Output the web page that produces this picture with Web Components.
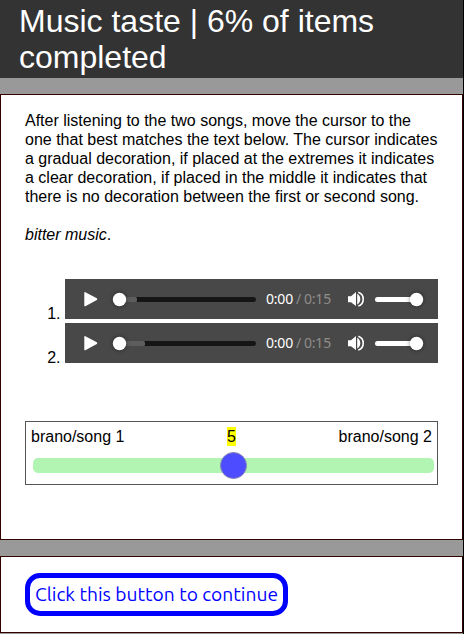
<!DOCTYPE html>
<html lang="en">
<head>
<meta charset="utf-8">
<title>Music taste</title>
<style>
body{margin:0;background:#999;overflow:hidden;font:16px/19px "Liberation Sans",Arial,sans-serif;color:#000}
</style>
</head>
<body>
<survey-page>
<page-title>Music taste | 6% of items<br>completed</page-title>
<page-card style="--h:446px">
<task-text>After listening to the two songs, move the cursor to the<br>one that best matches the text below. The cursor indicates<br>a gradual decoration, if placed at the extremes it indicates<br>a clear decoration, if placed in the middle it indicates that<br>there is no decoration between the first or second song.<br><br><i>bitter music</i>.</task-text>
<song-list>
<song-player number="1." buffered="17"></song-player>
<song-player number="2." buffered="25"></song-player>
</song-list>
<preference-slider value="5"><span slot="left">brano/song 1</span><span slot="right">brano/song 2</span></preference-slider>
</page-card>
<page-card style="--h:77px"><continue-button>Click this button to continue</continue-button></page-card>
</survey-page>
<script>
const define = (name, html, setup) => customElements.define(name, class extends HTMLElement {
  constructor() {
    super();
    this.attachShadow({mode: 'open'}).innerHTML = html;
  }
  connectedCallback() { if (setup) setup(this, this.shadowRoot); }
});

define('survey-page', `<style>
:host{display:flex;flex-direction:column;gap:16px;box-sizing:border-box;height:634px;border-right:1px solid #000}
</style><slot></slot>`);

define('page-title', `<style>
:host{display:block;box-sizing:border-box;height:78px;flex:none;padding:3px 19px;background:#333;color:#fff;font-size:32px;line-height:36px;white-space:nowrap}
</style><slot></slot>`);

define('page-card', `<style>
:host{display:block;box-sizing:border-box;height:var(--h);flex:none;padding:16px 24px;background:#fff;border:1px solid #300}
</style><slot></slot>`);

define('task-text', `<style>:host{display:block;white-space:nowrap}</style><slot></slot>`);

define('song-list', `<style>
:host{display:flex;flex-direction:column;gap:4px;margin-top:35px}
</style><slot></slot>`);

define('song-player', `<style>
:host{display:grid;grid-template-columns:40px 373px;height:40px}
.num{align-self:end;text-align:right;padding-right:4.5px;line-height:19px;transform:translateY(4px)}
.bar{display:flex;align-items:center;height:40px;background:#484848;font:14px/20px "Noto Sans",sans-serif;letter-spacing:-.2px;white-space:nowrap;overflow:hidden}
svg{display:block;flex:none}
.time{width:91px;display:flex;color:#fff;padding-left:10px;box-sizing:border-box}
.dim{color:#8f8d8a}
.sep{padding:0 3px}
.knob{filter:drop-shadow(0 0 2px #0007)}
</style>
<span class="num"></span>
<div class="bar">
<svg width="191" height="40"><path d="M20 13.8L31 19.6Q32 20.1 31 20.7L20 26.6Z" fill="#fff" stroke="#fff" stroke-width="1.4" stroke-linejoin="round"/>
<rect x="52" y="18" width="139" height="5" rx="2.5" fill="#151515"/><rect class="buf" x="55" y="18" height="5" rx="1.5" fill="#5d5d5d"/>
<circle class="knob" cx="54.5" cy="20.5" r="6.7" fill="#fff"/></svg>
<div class="time"><span>0:00</span><span class="dim sep">/</span><span class="dim">0:15</span></div>
<svg width="91" height="40"><path d="M1 17.3H4L9 13V27L4 23.3H1Z" fill="#fff"/><path d="M10.2 14.8Q13.3 16.8 13.3 20.2T10.2 25.6Z" fill="#fff"/><path d="M11.3 13.3Q16.2 15 16.2 20.2T11.3 27" fill="none" stroke="#fff" stroke-width="1.6"/>
<rect x="28" y="18" width="44" height="5" rx="2.5" fill="#fff"/><circle class="knob" cx="69.5" cy="20.5" r="6.7" fill="#fff"/></svg>
</div>`, (el, root) => {
  root.querySelector('.num').textContent = el.getAttribute('number');
  root.querySelector('.buf').setAttribute('width', el.getAttribute('buffered'));
});

define('preference-slider', `<style>
:host{display:block;box-sizing:border-box;height:64px;margin-top:58px;border:1px solid #555;padding:5px}
.labels{display:grid;grid-template-columns:1fr auto 1fr;height:19px}
.labels ::slotted([slot=right]){text-align:right}
mark{background:#ff0;color:#000;display:block;height:19px}
.track{display:flex;justify-content:center;align-items:center;margin:12px -2px 0 2px;height:15px;border-radius:5px;background:#b2f4b2}
.thumb{box-sizing:border-box;flex:none;width:27px;height:27px;border-radius:50%;background:#4d4dff;border:1px solid #8585b0}
</style><div class="labels"><slot name="left"></slot><mark></mark><slot name="right"></slot></div><div class="track"><div class="thumb"></div></div>`, (el, root) => {
  root.querySelector('mark').textContent = el.getAttribute('value');
});

define('continue-button', `<style>
:host{display:block;box-sizing:border-box;width:263px;height:43px;border:5px solid #00f;border-radius:15px;padding:0 5px;color:#00f;font:400 19.2px/33px Ubuntu,"Noto Sans",sans-serif;white-space:nowrap}
</style><slot></slot>`);
</script>
</body>
</html>
